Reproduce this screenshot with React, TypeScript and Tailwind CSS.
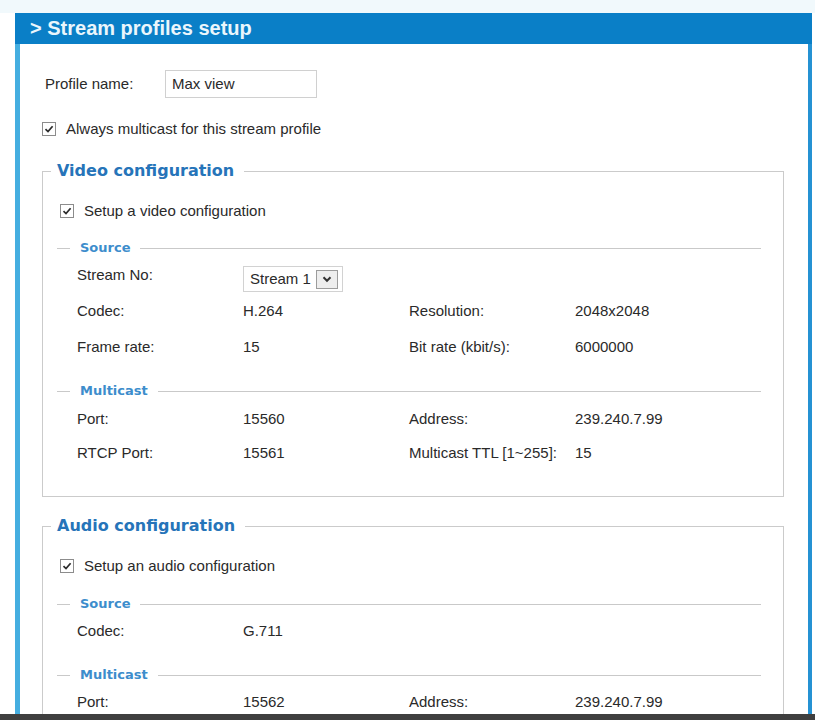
import React from 'react';

const legendFont = "font-['DejaVu_Sans',Verdana,sans-serif] font-bold";

const CheckBox = () => (
  <span className="flex h-[14px] w-[14px] shrink-0 items-center justify-center border border-[#8c8c8c] bg-white">
    <svg width="10" height="10" viewBox="0 0 10 10">
      <path d="M1.5 5.2 L4 7.6 L8.6 2.2" fill="none" stroke="#2b2b2b" strokeWidth="1.7" />
    </svg>
  </span>
);

const CheckRow = ({ label, className }: { label: string; className?: string }) => (
  <label className={`flex h-[20px] items-center gap-[10px] ${className ?? ''}`}>
    <CheckBox />
    <span>{label}</span>
  </label>
);

const SubLegend = ({ title, className }: { title: string; className?: string }) => (
  <div className={`ml-[14px] mr-[22px] flex h-[18px] items-center ${className ?? ''}`}>
    <span className="h-px w-[13px] bg-[#c9c9c9]" />
    <span className={`px-[10px] text-[13px] leading-[18px] text-[#3d8dcc] ${legendFont}`}>{title}</span>
    <span className="h-px flex-1 bg-[#c9c9c9]" />
  </div>
);

const DataRow = ({ cells, className }: { cells: string[]; className?: string }) => (
  <div className={`ml-[34px] grid h-[20px] grid-cols-[166px_166px_166px_1fr] items-center ${className ?? ''}`}>
    {cells.map((c, i) => (
      <span key={i}>{c}</span>
    ))}
  </div>
);

const StreamSelect = () => (
  <div className="flex h-[26px] w-[100px] items-center justify-between border border-[#d2d2d2] bg-white pl-[6px] pr-[4px]">
    <span>Stream 1</span>
    <span className="flex h-[19px] w-[22px] items-center justify-center border border-[#9c9c9c] bg-[#eeeeee]">
      <svg width="12" height="12" viewBox="0 0 12 12">
        <path d="M2.5 4.3 L6 7.8 L9.5 4.3" fill="none" stroke="#333" strokeWidth="2" />
      </svg>
    </span>
  </div>
);

const Config = ({ title, className, children }: { title: string; className?: string; children: React.ReactNode }) => (
  <fieldset className={`w-[742px] border border-[#cbcbcb] ${className ?? ''}`}>
    <legend className={`ml-[8px] pl-[6px] pr-[10px] text-[16px] leading-[20px] text-[#2674b9] ${legendFont}`}>
      {title}
    </legend>
    {children}
  </fieldset>
);

export default function App() {
  return (
    <div className="flex h-[720px] w-[815px] flex-col overflow-hidden bg-white font-['Liberation_Sans',Arial,sans-serif] text-[15px] leading-[20px] text-[#2a2a2a]">
      <div className="h-[13px] shrink-0 bg-[#f1f9fc]" />
      <div className="ml-[15px] flex min-h-0 w-[797px] flex-1 flex-col overflow-hidden">
        <div className="h-[31px] shrink-0 bg-[#0a7fc7] pl-[15px] text-[20px] font-bold leading-[31px] text-[#eaf6fc]">
          &gt; Stream profiles setup
        </div>
        <div className="flex-1 border-l-[5px] border-r-[4px] border-l-[#45aee0] border-r-[#2592d3] pl-[22px] pr-[25px] pt-[26px]">
          <div className="flex h-[28px] items-center">
            <span className="ml-[3px] w-[120px]">Profile name:</span>
            <div className="flex h-[28px] w-[152px] items-center border border-[#d0d0d0] pl-[6px]">Max view</div>
          </div>

          <CheckRow label="Always multicast for this stream profile" className="mt-[21px]" />

          <Config title="Video configuration" className="mt-[22px] pb-[33px]">
            <CheckRow label="Setup a video configuration" className="ml-[17px] mt-[20px]" />
            <SubLegend title="Source" className="mt-[18px]" />
            <div className="ml-[34px] mt-[9px] flex h-[26px] items-start">
              <span className="w-[166px] leading-[18px]">Stream No:</span>
              <StreamSelect />
            </div>
            <DataRow cells={['Codec:', 'H.264', 'Resolution:', '2048x2048']} className="mt-[9px]" />
            <DataRow cells={['Frame rate:', '15', 'Bit rate (kbit/s):', '6000000']} className="mt-[16px]" />
            <SubLegend title="Multicast" className="mt-[25px]" />
            <DataRow cells={['Port:', '15560', 'Address:', '239.240.7.99']} className="mt-[9px]" />
            <DataRow cells={['RTCP Port:', '15561', 'Multicast TTL [1~255]:', '15']} className="mt-[14px]" />
          </Config>

          <Config title="Audio configuration" className="mt-[19px] pb-[33px]">
            <CheckRow label="Setup an audio configuration" className="ml-[17px] mt-[20px]" />
            <SubLegend title="Source" className="mt-[19px]" />
            <DataRow cells={['Codec:', 'G.711', '', '']} className="mt-[8px]" />
            <SubLegend title="Multicast" className="mt-[25px]" />
            <DataRow cells={['Port:', '15562', 'Address:', '239.240.7.99']} className="mt-[8px]" />
          </Config>
        </div>
      </div>
      <div className="h-[6px] shrink-0 bg-[#3f3f3f]" />
    </div>
  );
}
